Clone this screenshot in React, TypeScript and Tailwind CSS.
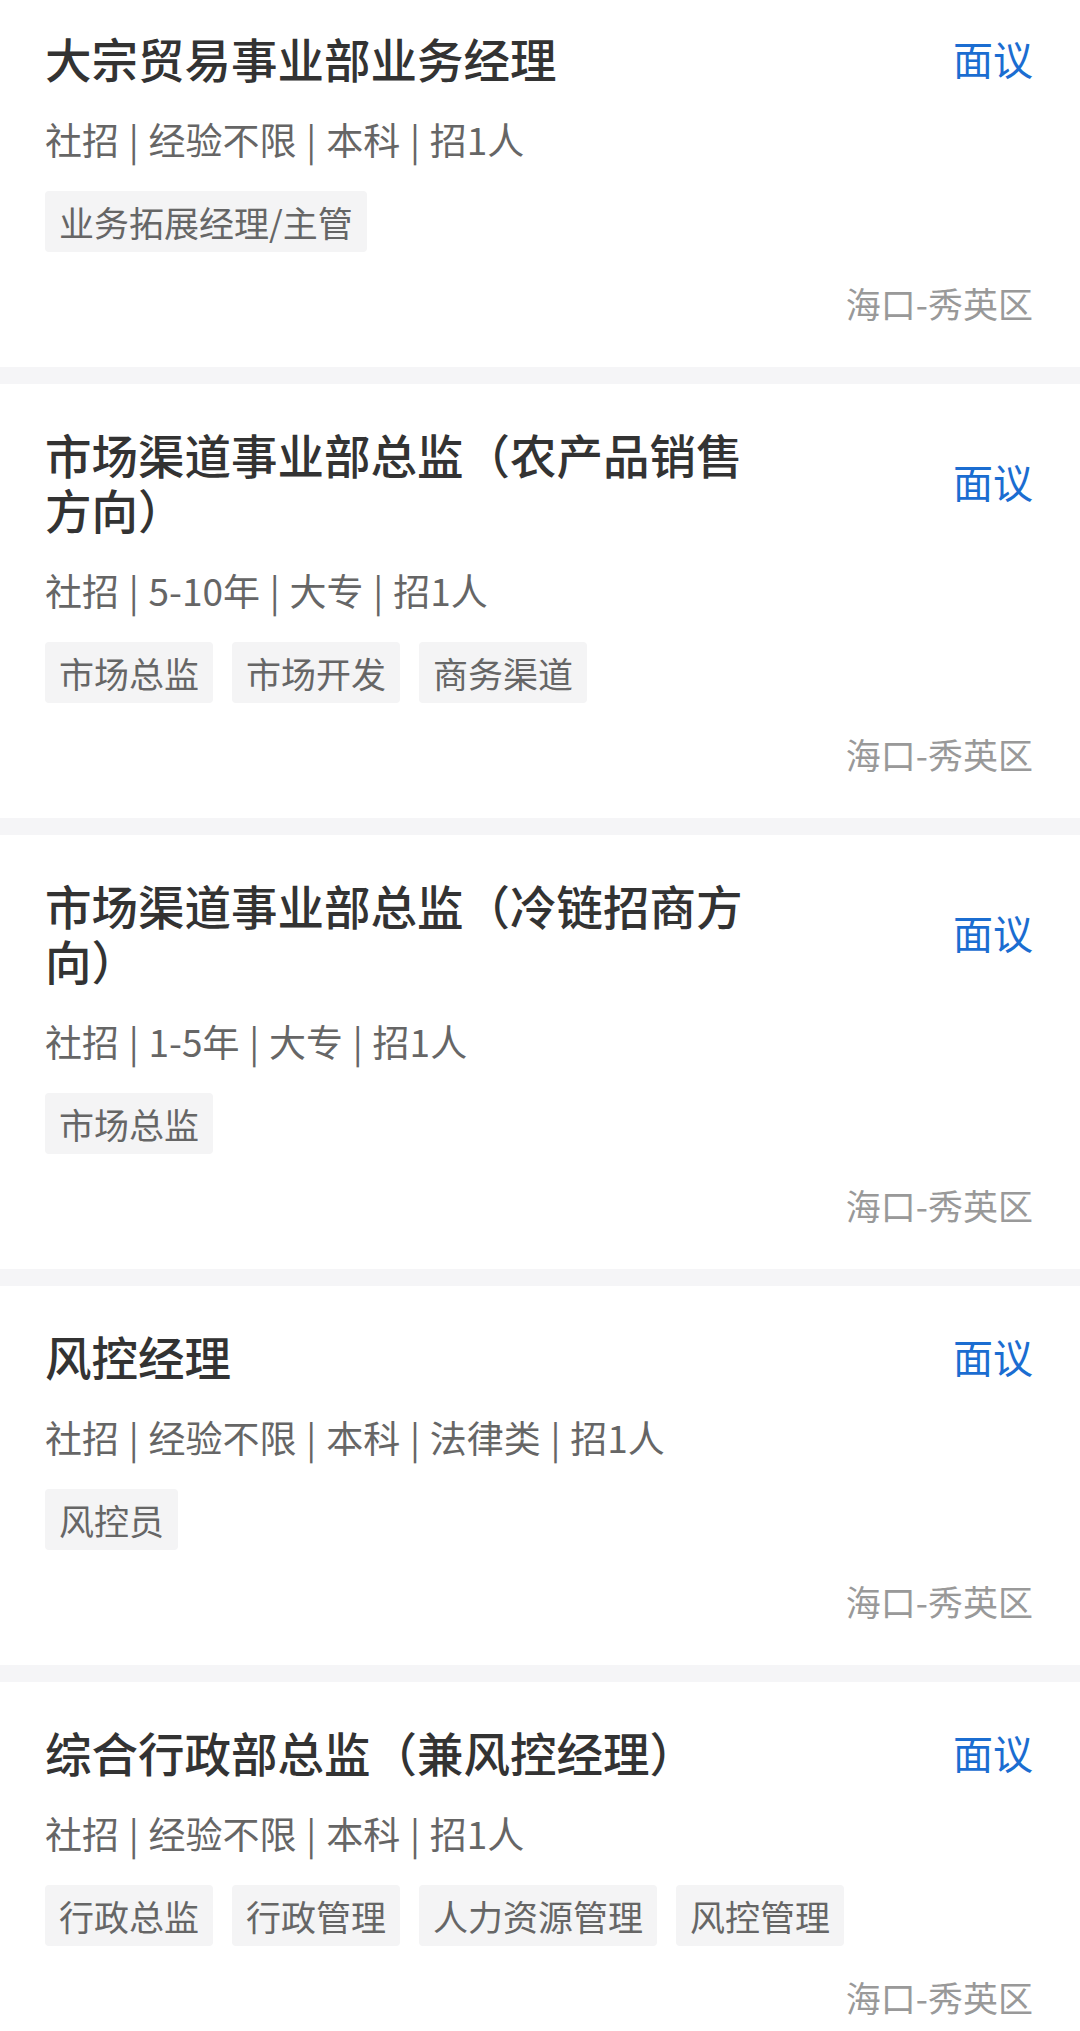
import React from 'react';

type Job = {
  title: string;
  meta: string;
  tags: string[];
  location: string;
};

const JOBS: Job[] = [
  {
    title: '大宗贸易事业部业务经理',
    meta: '社招 | 经验不限 | 本科 | 招1人',
    tags: ['业务拓展经理/主管'],
    location: '海口-秀英区',
  },
  {
    title: '市场渠道事业部总监（农产品销售方向）',
    meta: '社招 | 5-10年 | 大专 | 招1人',
    tags: ['市场总监', '市场开发', '商务渠道'],
    location: '海口-秀英区',
  },
  {
    title: '市场渠道事业部总监（冷链招商方向）',
    meta: '社招 | 1-5年 | 大专 | 招1人',
    tags: ['市场总监'],
    location: '海口-秀英区',
  },
  {
    title: '风控经理',
    meta: '社招 | 经验不限 | 本科 | 法律类 | 招1人',
    tags: ['风控员'],
    location: '海口-秀英区',
  },
  {
    title: '综合行政部总监（兼风控经理）',
    meta: '社招 | 经验不限 | 本科 | 招1人',
    tags: ['行政总监', '行政管理', '人力资源管理', '风控管理'],
    location: '海口-秀英区',
  },
];

function JobCard({ job, first }: { job: Job; first?: boolean }) {
  return (
    <div className={first ? 'bg-white pl-[45px] pr-[47px] pt-[30px] pb-[42px]' : 'bg-white pl-[45px] pr-[47px] pt-[42px] pb-[42px]'}>
      <div className="flex items-center justify-between">
        <h3 className="max-w-[730px] text-[46.5px] leading-[55px] font-medium text-[#333333]">{job.title}</h3>
        <span className="text-[40px] leading-[50px] text-[#1b6dd1]">面议</span>
      </div>
      <p className="mt-[30px] text-[37px] leading-[48px] text-[#666666] [word-spacing:1.5px]">{job.meta}</p>
      <div className="mt-[28px] flex flex-wrap gap-[19px]">
        {job.tags.map((tag) => (
          <span key={tag} className="rounded-[4px] bg-[#f4f4f5] px-[14px] text-[35px] leading-[61px] text-[#666666]">
            {tag}
          </span>
        ))}
      </div>
      <p className="mt-[28px] text-right text-[35px] leading-[45px] text-[#999999]">{job.location}</p>
    </div>
  );
}

export default function App() {
  return (
    <div
      className="flex h-[2031px] flex-col gap-[17px] overflow-hidden bg-[#f5f5f7]"
      style={{ fontFamily: '"Noto Sans CJK SC", "Noto Sans", sans-serif' }}
    >
      {JOBS.map((job, i) => (
        <JobCard key={i} job={job} first={i === 0} />
      ))}
    </div>
  );
}
